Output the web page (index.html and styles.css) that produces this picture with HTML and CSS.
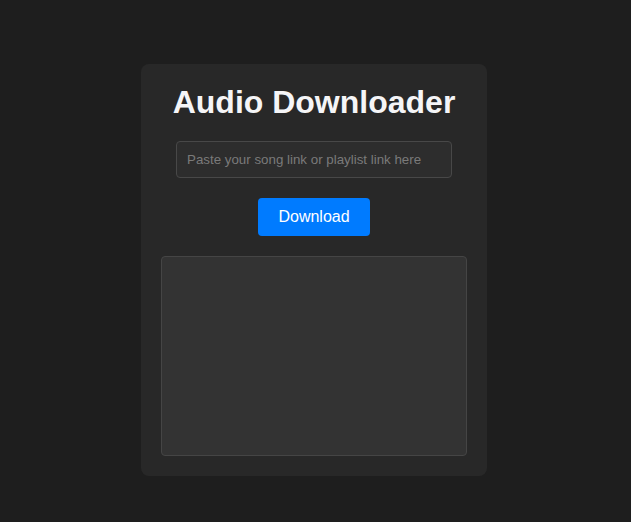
FILE: index.html
```html
<!DOCTYPE html>
<html>
    <head>
        <title>Audio Downloader</title>
        <link rel="stylesheet" href="styles.css">
    </head>
<body>
    <div class="container">
        <h1>Audio Downloader</h1>

        <input type="text" id="song_link" class="link-input" placeholder="Paste your song link or playlist link here">

        <button type="button" id="download_btn" class="button">Download</button>

        <div id="output" class="output"></div>
    </div>
</body>
</html>
```

FILE: styles.css
```css
body {
    font-family: "Liberation Sans", Arial, sans-serif;
    background-color: #1e1e1e;
    color: #f5f5f7;
    display: flex;
    justify-content: center;
    align-items: flex-start;
    margin: 0;
    padding: 64px 3px 0 0;
}

.container {
    width: 306px;
    padding: 20px;
    background-color: #282828;
    border-radius: 8px;
    display: flex;
    flex-direction: column;
    align-items: center;
    gap: 20px;
}

h1 {
    margin: 0;
    font-size: 32px;
    font-weight: bold;
    line-height: 37px;
    color: #f5f5f7;
}

.link-input {
    box-sizing: border-box;
    width: 276px;
    height: 37px;
    padding: 0 10px;
    font-family: "Liberation Sans", Arial, sans-serif;
    font-size: 13.333px;
    color: #ddd;
    background-color: #2d2d2d;
    border: 1px solid #484848;
    border-radius: 4px;
    outline: none;
}

.link-input::placeholder {
    color: #7a7a7a;
}

.button {
    width: 112px;
    height: 38px;
    background-color: #007bff;
    color: #fff;
    font-family: "Liberation Sans", Arial, sans-serif;
    font-size: 16px;
    border: none;
    border-radius: 4px;
    cursor: pointer;
}

.button:hover {
    background-color: #0069d9;
}

.output {
    box-sizing: border-box;
    width: 306px;
    height: 200px;
    background-color: #333;
    border: 1px solid #454545;
    border-radius: 4px;
}
```
